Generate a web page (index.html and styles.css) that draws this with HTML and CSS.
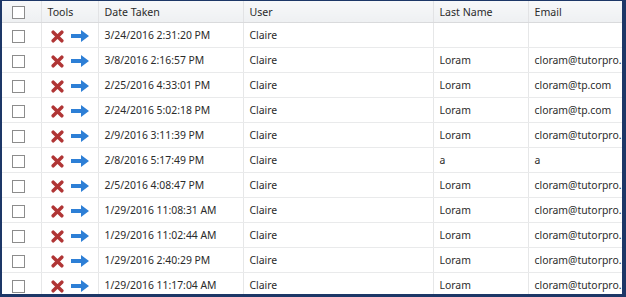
FILE: index.html
```html
<!DOCTYPE html>
<html>
<head>
<meta charset="utf-8">
<link rel="stylesheet" href="styles.css">
</head>
<body>
<div class="frame">
<table class="grid">
<colgroup>
<col class="c-check"><col class="c-tools"><col class="c-date"><col class="c-user"><col class="c-last"><col class="c-email">
</colgroup>
<thead>
<tr><th><span class="box"></span></th><th>Tools</th><th>Date Taken</th><th>User</th><th>Last Name</th><th>Email</th></tr>
</thead>
<tbody>
<tr><td><span class="box"></span></td><td class="tools"><svg class="x" viewBox="0 0 12 12"><path d="M2 2L10 10M10 2L2 10"/></svg><svg class="arrow" viewBox="0 0 18 12"><path d="M0 4h10V0l8 6-8 6V8H0z"/></svg></td><td>3/24/2016 2:31:20 PM</td><td>Claire</td><td></td><td></td></tr>
<tr><td><span class="box"></span></td><td class="tools"><svg class="x" viewBox="0 0 12 12"><path d="M2 2L10 10M10 2L2 10"/></svg><svg class="arrow" viewBox="0 0 18 12"><path d="M0 4h10V0l8 6-8 6V8H0z"/></svg></td><td>3/8/2016 2:16:57 PM</td><td>Claire</td><td>Loram</td><td>cloram@tutorpro.</td></tr>
<tr><td><span class="box"></span></td><td class="tools"><svg class="x" viewBox="0 0 12 12"><path d="M2 2L10 10M10 2L2 10"/></svg><svg class="arrow" viewBox="0 0 18 12"><path d="M0 4h10V0l8 6-8 6V8H0z"/></svg></td><td>2/25/2016 4:33:01 PM</td><td>Claire</td><td>Loram</td><td>cloram@tp.com</td></tr>
<tr><td><span class="box"></span></td><td class="tools"><svg class="x" viewBox="0 0 12 12"><path d="M2 2L10 10M10 2L2 10"/></svg><svg class="arrow" viewBox="0 0 18 12"><path d="M0 4h10V0l8 6-8 6V8H0z"/></svg></td><td>2/24/2016 5:02:18 PM</td><td>Claire</td><td>Loram</td><td>cloram@tp.com</td></tr>
<tr><td><span class="box"></span></td><td class="tools"><svg class="x" viewBox="0 0 12 12"><path d="M2 2L10 10M10 2L2 10"/></svg><svg class="arrow" viewBox="0 0 18 12"><path d="M0 4h10V0l8 6-8 6V8H0z"/></svg></td><td>2/9/2016 3:11:39 PM</td><td>Claire</td><td>Loram</td><td>cloram@tutorpro.</td></tr>
<tr><td><span class="box"></span></td><td class="tools"><svg class="x" viewBox="0 0 12 12"><path d="M2 2L10 10M10 2L2 10"/></svg><svg class="arrow" viewBox="0 0 18 12"><path d="M0 4h10V0l8 6-8 6V8H0z"/></svg></td><td>2/8/2016 5:17:49 PM</td><td>Claire</td><td>a</td><td>a</td></tr>
<tr><td><span class="box"></span></td><td class="tools"><svg class="x" viewBox="0 0 12 12"><path d="M2 2L10 10M10 2L2 10"/></svg><svg class="arrow" viewBox="0 0 18 12"><path d="M0 4h10V0l8 6-8 6V8H0z"/></svg></td><td>2/5/2016 4:08:47 PM</td><td>Claire</td><td>Loram</td><td>cloram@tutorpro.</td></tr>
<tr><td><span class="box"></span></td><td class="tools"><svg class="x" viewBox="0 0 12 12"><path d="M2 2L10 10M10 2L2 10"/></svg><svg class="arrow" viewBox="0 0 18 12"><path d="M0 4h10V0l8 6-8 6V8H0z"/></svg></td><td>1/29/2016 11:08:31 AM</td><td>Claire</td><td>Loram</td><td>cloram@tutorpro.</td></tr>
<tr><td><span class="box"></span></td><td class="tools"><svg class="x" viewBox="0 0 12 12"><path d="M2 2L10 10M10 2L2 10"/></svg><svg class="arrow" viewBox="0 0 18 12"><path d="M0 4h10V0l8 6-8 6V8H0z"/></svg></td><td>1/29/2016 11:02:44 AM</td><td>Claire</td><td>Loram</td><td>cloram@tutorpro.</td></tr>
<tr><td><span class="box"></span></td><td class="tools"><svg class="x" viewBox="0 0 12 12"><path d="M2 2L10 10M10 2L2 10"/></svg><svg class="arrow" viewBox="0 0 18 12"><path d="M0 4h10V0l8 6-8 6V8H0z"/></svg></td><td>1/29/2016 2:40:29 PM</td><td>Claire</td><td>Loram</td><td>cloram@tutorpro.</td></tr>
<tr><td><span class="box"></span></td><td class="tools"><svg class="x" viewBox="0 0 12 12"><path d="M2 2L10 10M10 2L2 10"/></svg><svg class="arrow" viewBox="0 0 18 12"><path d="M0 4h10V0l8 6-8 6V8H0z"/></svg></td><td>1/29/2016 11:17:04 AM</td><td>Claire</td><td>Loram</td><td>cloram@tutorpro.</td></tr>
</tbody>
</table>
</div>
</body>
</html>
```

FILE: styles.css
```css
html, body { margin: 0; padding: 0; background: #ffffff; }
.frame {
  width: 626px;
  height: 297px;
  box-sizing: border-box;
  border: 2px solid #1d3767;
  border-top-width: 1px;
  border-right-width: 4px;
  border-bottom-width: 3px;
  overflow: hidden;
  background: #ffffff;
}
.grid {
  border-collapse: collapse;
  table-layout: fixed;
  width: 620px;
  font-family: "Noto Sans", "Open Sans", sans-serif;
  font-size: 10.4px;
  color: #2b2b2b;
}
.c-check { width: 39px; }
.c-tools { width: 57px; }
.c-date { width: 145px; }
.c-user { width: 190px; }
.c-last { width: 95px; }
.c-email { width: 94px; }
.grid th {
  height: 21px;
  font-weight: normal;
  text-align: left;
  padding: 0 0 0 6px;
  background: linear-gradient(#f7f8f9, #eef0f2);
  border-right: 1px solid #e2e3e5;
  border-bottom: 1px solid #d9dadc;
  white-space: nowrap;
  overflow: hidden;
  line-height: 18px;
  font-size: 10.6px;
}
.grid td {
  height: 24px;
  padding: 0 0 0 6px;
  border-right: 1px solid #e6e7e8;
  border-bottom: 1px solid #e9eaeb;
  white-space: nowrap;
  overflow: hidden;
  line-height: 20px;
}
.grid th:first-child, .grid td:first-child { padding-left: 10px; }
.grid th:last-child, .grid td:last-child { border-right: none; }
.box {
  display: inline-block;
  width: 11px;
  height: 11px;
  border: 1px solid #8c8c8c;
  background: #fff;
  vertical-align: middle;
}
.grid td.tools { padding-left: 9px; }
.x {
  width: 13px;
  height: 13px;
  vertical-align: middle;
  stroke: #b03535;
  stroke-width: 3.2;
  stroke-linecap: round;
  fill: none;
}
.arrow {
  width: 18px;
  height: 12px;
  fill: #2d7fd6;
  vertical-align: middle;
  margin-left: 7px;
}
```
